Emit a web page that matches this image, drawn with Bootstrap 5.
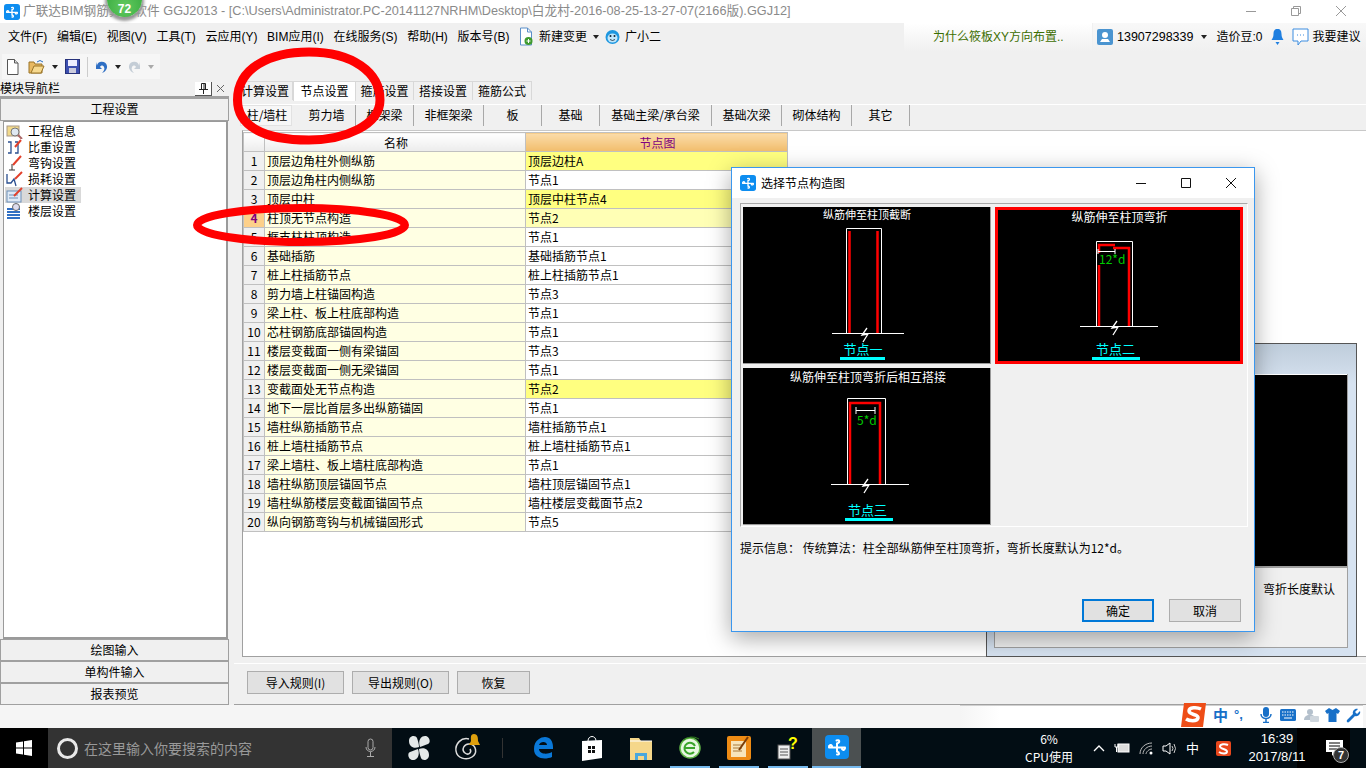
<!DOCTYPE html>
<html lang="zh-CN">
<head>
    <meta charset="UTF-8">
    <meta name="viewport" content="width=device-width, initial-scale=1.0">
    <title>广联达BIM钢筋算量软件 GGJ2013</title>
    <link href="https://cdn.jsdelivr.net/npm/bootstrap@5.3.0/dist/css/bootstrap.min.css" rel="stylesheet">
    <style>
        html, body { margin: 0; height: 768px; overflow: hidden; }
        body { width: 1366px; position: relative; background: #f0f0f0; color: #000; font-family: "Liberation Sans", "Noto Sans CJK SC", sans-serif; font-size: 12px; line-height: 1.2; }
        svg { display: block; flex: none; }
        .cjk { font-family: "Noto Sans CJK SC", sans-serif; }
        .w-53 { width: 53px; } .w-55 { width: 55px; } .w-58 { width: 58px; } .w-59 { width: 59px; } .w-63 { width: 63px; }
        .w-70 { width: 70px; } .w-73 { width: 73px; } .w-97 { width: 97px; } .w-112 { width: 112px; }

        .title-bar { height: 23px; background: #fff; color: #8a8a8a; padding-left: 4px; white-space: nowrap; }
        .title-bar .app-name { margin-left: 3px; font-size: 12.7px; }
        .win-ctrls { position: absolute; right: 20px; top: 6px; gap: 35px; }
        .score-ball { position: absolute; left: 107px; top: -18px; width: 35px; height: 35px; border-radius: 50%; background: radial-gradient(circle at 50% 70%, #62c95f, #2aa136); box-shadow: 0 2px 3px 2px #999; color: #fff; font-weight: 700; font-size: 12px; text-align: center; padding-top: 20px; }

        .menu-bar { height: 28px; white-space: nowrap; }
        .menu-left { padding-left: 8px; gap: 9.700px; width: 904px; }
        .tight-3 { margin-left: -3px; }
        .tight-4 { margin-left: -4px; }
        .tight-5 { margin-left: -5px; }
        .news-box { width: 188px; height: 28px; background: linear-gradient(#fff, #f0f0f0); color: #3c6e00; padding-left: 29px; font-size: 12px; }
        .user-box { flex: 1; height: 28px; margin-left: 1px; padding-left: 4px; background: linear-gradient(#f8f8f8, #f0f0f0); }
        .phone-no { margin-left: 4px; font-size: 12.500px; }
        .user-gap { margin-left: 9px; }
        .mini-caret { width: 0; height: 0; border: 3px solid transparent; border-top: 4px solid #222; border-bottom: 0; }
        .mini-caret.off { border-top-color: #aaa; }

        .tool-bar { height: 30px; padding-top: 3px; }
        .tool-strip { margin-left: 2px; width: 158px; height: 25px; background: #f6f6f6; padding-left: 4px; gap: 7px; }
        .tool-sep { width: 1px; height: 20px; background: #ccc; }
        .open-ico { margin-left: 2px; }

        .work-area { height: 624px; }
        .nav-pane { width: 229px; flex: none; }
        .nav-head { height: 16px; border-bottom: 1px solid #a0a0a0; font-size: 12px; white-space: nowrap; }
        .pin-btn { margin-left: auto; width: 17px; height: 14px; border: solid #555; border-width: 0 1px 1px 0; background: #fff; margin-right: 4px; }
        .pane-btn { display: block; width: 100%; height: 22px; padding: 1px 0 0; border: 1px solid #a0a0a0; border-radius: 0; background: #f0f0f0; color: #000; font-size: 12px; line-height: 20px; text-align: center; flex: none; }
        .pane-btn.first { height: 24px; padding: 0; line-height: 22px; border-width: 2px 1px 1px; }
        .tree-box { height: 518px; flex: none; margin-left: 3px; margin-right: 1px; background: #fff; border: 1px solid #9a9a9a; border-width: 1px 2px 2px 1px; padding: 1px 0 0 1px; }
        .tree-row { height: 16px; width: 76px; gap: 5px; white-space: nowrap; padding-left: 1px; font-family: "Noto Sans CJK SC", sans-serif; }
        .tree-row.on { background: #d9d9d9; }

        .right-pane { margin-left: 5px; flex: 1; min-width: 0; }
        .page-tabs { height: 19px; padding-left: 4px; border: 0; flex-wrap: nowrap; }
        .page-tab { height: 19px; line-height: 18px; text-align: center; font-family: "Noto Sans CJK SC", sans-serif; background: #f0f0f0; border: 1px solid #d8d8d8; border-bottom: 0; border-left: 0; }
        .page-tab.on { height: 20px; background: #fff; border-left: 1px solid #d8d8d8; }
        .sub-tabs { height: 24px; margin: 4px 0 0 6px; background: #f0f0f0; border-top: 1px solid #fff; }
        .sub-tab { height: 21px; line-height: 20px; text-align: center; border-right: 1px solid #a8a8a8; font-family: "Noto Sans CJK SC", sans-serif; flex: none; }
        .sub-tab.on { background: #f7f7f7; box-shadow: inset 0 0 0 1px #e2e2e2; border-right-color: #f0f0f0; margin-right: 5px; padding-left: 2px; }
        .grid-panel { height: 527px; margin: 2px 0 0 8px; background: #fff; border-top: 1px solid #c8c8c8; border-bottom: 1px solid #a0a0a0; border-left: 1px solid #a0a0a0; padding-top: 1px; }
        .rule-table { width: 544px; margin: 0; table-layout: fixed; border-collapse: collapse; font-family: "Noto Sans CJK SC", sans-serif; font-size: 12px; }
        .rule-table th, .rule-table td { height: 19px; padding: 0 0 0 2px; line-height: 17px; border: 1px solid #c0c0c0; background: #fff; color: #000; font-weight: 400; white-space: nowrap; overflow: hidden; box-shadow: none; }
        .rule-table th { text-align: center; background: linear-gradient(#fff, #ececec); }
        .rule-table th.pic-col { background: linear-gradient(#fbdcaa, #f2bd6b); color: #800080; }
        .rule-table .num-col { background: #f0f0f0; text-align: center; padding: 0; }
        .rule-table .name-col { background: #ffffe3; }
        .rule-table .hl-cell { background: #ffff80; }
        .rule-table .cur-cell { background: #ffffb5; }
        .rule-table .cur-num { background: #fdd08a; color: #800080; font-weight: 700; }
        .col-n { width: 21px; } .col-name { width: 261px; } .col-pic { width: 262px; }
        .btn-bar { height: 42px; margin-top: 6px; padding: 7px 0 0 13px; gap: 8px; border-top: 1px solid #fff; border-bottom: 1px solid #a0a0a0; }
        .rule-btn { height: 23px; padding: 0; border: 1px solid #adadad; border-radius: 0; background: #e1e1e1; color: #000; font-family: "Noto Sans CJK SC", sans-serif; font-size: 12px; line-height: 20px; }

        .status-strip { height: 23px; background: #f5f5f5; }
        .ime-white { position: absolute; left: 960px; right: 3px; top: 705px; height: 23px; background: linear-gradient(90deg, #f5f5f5, #fff 40px); border-top: 1px solid #d0d0d0; }
        .ime-bar { position: absolute; left: 1180px; top: 702px; width: 186px; height: 26px; }
        .ime-cn { margin-left: 6px; color: #1870c8; font-weight: 700; font-size: 15px; font-family: "Noto Sans CJK SC", sans-serif; }
        .ime-dot { margin-left: 6px; color: #1870c8; font-weight: 700; font-size: 13px; }
        .ime-mic { margin-left: 17px; } .ime-key { margin-left: 8px; } .ime-usr { margin-left: 7px; } .ime-six { margin-left: 6px; }

        .task-bar { height: 40px; color: #fff; background: linear-gradient(90deg, #020d14 1297px, #000 1297px, #000 1350px, #020d14 1350px); }
        .start-box { width: 48px; height: 40px; background: #000; flex: none; }
        .search-box { width: 344px; height: 40px; flex: none; background: #333; color: #999; padding-left: 9px; font-size: 14px; font-family: "Noto Sans CJK SC", sans-serif; white-space: nowrap; }
        .search-ring { width: 21px; height: 21px; border: 3px solid #e8e8e8; border-radius: 50%; margin-right: 6px; flex: none; }
        .task-slot { width: 49px; height: 40px; flex: none; }
        .task-slot.first-slot { margin-left: 2px; }
        .task-slot.after-sep { margin-left: 15px; }
        .task-slot.open { background: linear-gradient(#76b9ed, #76b9ed) center bottom / 40px 2px no-repeat; }
        .task-slot.live { background: #4b5051; border-bottom: 2px solid #76b9ed; }
        .task-sep { width: 1px; height: 20px; background: #333; margin-left: 10px; flex: none; }
        .cpu-box { width: 80px; flex: none; margin-left: 148px; text-align: center; font-size: 12px; line-height: 18px; font-family: "Noto Sans CJK SC", sans-serif; }
        .tray-box { gap: 9px; margin-left: 4px; width: 144px; flex: none; }
        .tray-cn { font-size: 13px; font-family: "Noto Sans CJK SC", sans-serif; }
        .clock-box { width: 80px; flex: none; text-align: center; line-height: 18px; font-size: 13px; height: 40px; }
        .note-box { width: 50px; height: 40px; flex: none; position: relative; padding: 12px 0 0 9px; }
        .note-badge { position: absolute; left: 16px; top: 19px; width: 16px; height: 16px; border-radius: 50%; background: #333; border: 1px solid #aaa; color: #fff; font-weight: 700; font-size: 11px; line-height: 14px; text-align: center; }

        .old-window { position: absolute; left: 986px; top: 343px; width: 371px; height: 314px; border: 1px solid #555; background: linear-gradient(#bfcddb, #d6e2f0 40px); padding: 30px 8px 8px 7px; }
        .old-inner { height: 274px; background: #f0f0f0; border: 1px solid #a0a0a0; border-top: 0; font-family: "Noto Sans CJK SC", sans-serif; }
        .old-black { height: 194px; background: #000; border-top: 1px solid #fff; border-bottom: 2px solid #a0a0a0; }
        .old-text { text-align: right; padding: 14px 12px 0 0; }

        .node-dialog { position: absolute; left: 731px; top: 167px; width: 524px; height: 465px; background: #f0f0f0; border: 1px solid #3b97ee; box-shadow: 0 6px 22px rgba(0, 0, 0, .35); font-family: "Noto Sans CJK SC", sans-serif; }
        .dlg-head { height: 30px; background: #fff; padding-left: 8px; font-size: 12px; gap: 5px; }
        .dlg-ctrls { margin-left: auto; padding-right: 18px; gap: 35px; }
        .pic-panel { margin: 5px 0 0 8px; width: 508px; height: 324px; padding: 3px 3px 2px 2px; border-top: 1px solid #a8a8a8; border-left: 1px solid #a8a8a8; border-right: 1px solid #fff; border-bottom: 1px solid #fff; display: grid; grid-template-columns: 248px 248px; grid-template-rows: 157px 157px; gap: 4px; align-content: start; }
        .pic-cell { background: #000; border-right: 1px solid #999; border-bottom: 1px solid #999; width: 248px; height: 157px; }
        .pic-cell.picked { border: 3px solid #f00; }
        .pic-cell svg { overflow: visible; }
        .pic-cell text { font-family: "Noto Sans CJK SC", sans-serif; }
        .dlg-hint { margin: 14px 0 0 8px; font-size: 12px; white-space: nowrap; }
        .dlg-foot { position: absolute; right: 13px; top: 431px; gap: 15px; }
        .dlg-btn { width: 72px; height: 23px; padding: 0; border: 1px solid #adadad; border-radius: 0; background: #e1e1e1; color: #000; font-size: 12px; font-family: "Noto Sans CJK SC", sans-serif; line-height: 19px; }
        .dlg-btn.main-btn { border: 2px solid #0078d7; }

        .red-marks { position: absolute; left: 0; top: 0; pointer-events: none; }
    </style>
</head>
<body>

<svg class="d-none" width="0" height="0">
    <symbol id="gld-logo" viewBox="0 0 24 24">
        <rect width="24" height="24" rx="4" fill="#0d8df0"/>
        <path d="M4 12.5h16M11.5 5.5c3-1.500 4 2 .5 3v8c3 1 2.500 3.500 0 3M4 12.500c-.500-2.500 2-3 3-1.500M20 12.500c.500 2.500-2 3-3 1.500" fill="none" stroke="#fff" stroke-width="2" stroke-linecap="round"/>
    </symbol>
</svg>

<div class="title-bar d-flex align-items-center">
    <svg width="16" height="16"><use href="#gld-logo"/></svg>
    <span class="app-name">广联达BIM钢筋算量软件 GGJ2013 - [C:\Users\Administrator.PC-20141127NRHM\Desktop\白龙村-2016-08-25-13-27-07(2166版).GGJ12]</span>
    <div class="win-ctrls d-flex align-items-center">
        <svg width="10" height="10"><path d="M0 5.500h10" stroke="#999"/></svg>
        <svg width="10" height="10"><path d="M.5 2.500h7v7h-7zM2.500 2.500v-2h7v7h-2" fill="none" stroke="#999"/></svg>
        <svg width="10" height="10"><path d="M0 0l10 10M10 0L0 10" stroke="#999"/></svg>
    </div>
</div>
<div class="score-ball">72</div>

<div class="menu-bar d-flex">
    <div class="menu-left d-flex align-items-center">
        <span>文件(F)</span><span>编辑(E)</span><span>视图(V)</span><span>工具(T)</span><span>云应用(Y)</span><span>BIM应用(I)</span><span>在线服务(S)</span><span>帮助(H)</span><span>版本号(B)</span>
        <svg width="15" height="20" viewBox="0 0 15 20"><path d="M1.500 1h7l4 4v13h-11z" fill="#fff" stroke="#5b8fc9"/><path d="M8.500 1v4h4" fill="none" stroke="#5b8fc9"/><circle cx="9.500" cy="14" r="4" fill="#3f9a2e"/><path d="M7.500 14h4M9.500 12v4" stroke="#fff"/></svg>
        <span class="tight-5">新建变更</span>
        <span class="mini-caret tight-4"></span>
        <svg class="tight-3" width="15" height="16" viewBox="0 0 15 16"><circle cx="7.500" cy="8" r="7" fill="#1d97e0"/><ellipse cx="7.500" cy="9" rx="5" ry="4.500" fill="#bfe6fb"/><circle cx="5.500" cy="7" r="1" fill="#123"/><circle cx="9.500" cy="7" r="1" fill="#123"/><path d="M5 10.500q2.500 2 5 0" fill="none" stroke="#123" stroke-width=".8"/></svg>
        <span class="tight-5">广小二</span>
    </div>
    <div class="news-box d-flex align-items-center">为什么筱板XY方向布置..</div>
    <div class="user-box d-flex align-items-center">
        <svg width="16" height="16" viewBox="0 0 16 16"><rect width="16" height="16" rx="2" fill="#4a94d0"/><circle cx="8" cy="6" r="3" fill="#fff"/><path d="M3 13h10l-2-3H5z" fill="#fff"/></svg>
        <span class="phone-no">13907298339</span>
        <span class="mini-caret ms-2"></span>
        <span class="user-gap">造价豆:0</span>
        <svg class="ms-2" width="13" height="18" viewBox="0 0 13 18"><path d="M6.500 1c3 0 4 2 4 5 0 3 1 4 2 6H.5c1-2 2-3 2-6 0-3 1-5 4-5z" fill="#1f7fe0"/><path d="M4.500 14h4l-2 3z" fill="#1f7fe0"/></svg>
        <svg class="ms-2" width="17" height="19" viewBox="0 0 17 19"><path d="M1 1h15v12H9l-3 4v-4H1z" fill="#fff" stroke="#3d8de0"/><path d="M5 7h1M8 7h1M11 7h1" stroke="#3d8de0"/></svg>
        <span class="ms-1">我要建议</span>
    </div>
</div>

<div class="tool-bar">
    <div class="tool-strip d-flex align-items-center">
        <svg width="13" height="16" viewBox="0 0 13 16"><path d="M1.500.5h7l3.500 3.500v11.500h-10.500z" fill="#fff" stroke="#555"/><path d="M8.500.5v3.500h3.500" fill="#ddd" stroke="#555"/></svg>
        <svg class="open-ico" width="17" height="15" viewBox="0 0 17 15"><path d="M1 3h5l1 2h7v9H1z" fill="#e8b962" stroke="#9a7428"/><path d="M3 14l3-7h10l-3 7z" fill="#f6d98f" stroke="#9a7428"/><path d="M9 3q3-3 6 0" fill="none" stroke="#2a6fc0"/></svg>
        <span class="mini-caret"></span>
        <svg width="15" height="15" viewBox="0 0 15 15"><rect x=".5" y=".5" width="14" height="14" fill="#3d4fb0" stroke="#27327a"/><rect x="3" y="1" width="9" height="6" fill="#eef"/><rect x="4" y="9" width="7" height="5" fill="#ccd"/></svg>
        <span class="tool-sep"></span>
        <svg width="13" height="15" viewBox="0 0 13 15"><path d="M2 7c0-5 9-6 10 0 .5 3-2 6-5 7 2-2 3-4 2-6-1-2-3-2-4 0l2 2H1V3z" fill="#2f6fc4"/></svg>
        <span class="mini-caret"></span>
        <svg width="13" height="15" viewBox="0 0 13 15"><path d="M11 7c0-5-9-6-10 0-.5 3 2 6 5 7-2-2-3-4-2-6 1-2 3-2 4 0l-2 2h6V3z" fill="#c4cdd6"/></svg>
        <span class="mini-caret off"></span>
    </div>
</div>

<div class="work-area d-flex">
    <div class="nav-pane d-flex flex-column">
        <div class="nav-head d-flex align-items-center">
            <span class="cjk">模块导航栏</span>
            <span class="pin-btn d-flex align-items-center justify-content-center">
                <svg width="9" height="11" viewBox="0 0 9 11"><path d="M2.500 .5h4v6h-4zM0 6.500h9M4.500 7v4M5 1v5" fill="none" stroke="#222"/></svg>
            </span>
            <svg class="me-1" width="9" height="9" viewBox="0 0 9 9"><path d="M1 1l7 7M8 1L1 8" stroke="#666"/></svg>
        </div>
        <button class="btn pane-btn first" type="button">工程设置</button>
        <div class="tree-box" id="tree-box"></div>
        <button class="btn pane-btn" type="button">绘图输入</button>
        <button class="btn pane-btn" type="button">单构件输入</button>
        <button class="btn pane-btn" type="button">报表预览</button>
    </div>

    <div class="right-pane d-flex flex-column">
        <div class="nav page-tabs">
            <div class="page-tab w-55">计算设置</div>
            <div class="page-tab on w-63">节点设置</div>
            <div class="page-tab w-58">箍筋设置</div>
            <div class="page-tab w-59">搭接设置</div>
            <div class="page-tab w-59">箍筋公式</div>
        </div>
        <div class="sub-tabs d-flex">
            <div class="sub-tab on w-53">柱/墙柱</div>
            <div class="sub-tab w-58">剪力墙</div>
            <div class="sub-tab w-58">框架梁</div>
            <div class="sub-tab w-70">非框架梁</div>
            <div class="sub-tab w-58">板</div>
            <div class="sub-tab w-58">基础</div>
            <div class="sub-tab w-112">基础主梁/承台梁</div>
            <div class="sub-tab w-70">基础次梁</div>
            <div class="sub-tab w-70">砌体结构</div>
            <div class="sub-tab w-58">其它</div>
        </div>
        <div class="grid-panel">
            <table class="table rule-table">
                <colgroup><col class="col-n"><col class="col-name"><col class="col-pic"></colgroup>
                <thead>
                <tr><th></th><th>名称</th><th class="pic-col">节点图</th></tr>
                </thead>
                <tbody id="rule-body"></tbody>
            </table>
        </div>
        <div class="btn-bar d-flex">
            <button class="btn rule-btn w-97" type="button">导入规则(I)</button>
            <button class="btn rule-btn w-97" type="button">导出规则(O)</button>
            <button class="btn rule-btn w-73" type="button">恢复</button>
        </div>
    </div>
</div>

<div class="status-strip"></div>

<div class="task-bar d-flex align-items-center">
    <div class="start-box d-flex align-items-center justify-content-center">
        <svg width="16" height="16" viewBox="0 0 16 16"><path d="M0 2.500l7-1v6H0zM8 1.300l8-1.300v7.500H8zM0 8.500h7v6l-7-1zM8 8.500h8V16l-8-1.300z" fill="#fff"/></svg>
    </div>
    <div class="search-box d-flex align-items-center">
        <span class="search-ring"></span>
        <span>在这里输入你要搜索的内容</span>
        <svg class="ms-auto me-3" width="11" height="20" viewBox="0 0 11 20"><rect x="3" y="1" width="5" height="11" rx="2.500" fill="none" stroke="#aaa"/><path d="M1 9c0 6 9 6 9 0M5.500 14v4M2 18.500h7" fill="none" stroke="#aaa"/></svg>
    </div>
    <div class="task-slot first-slot d-flex align-items-center justify-content-center">
        <svg width="22" height="26" viewBox="0 0 22 26"><path d="M11 12C6 14 1 12 1 6s7-6 8-3 2 6 2 9zM11 14c5-2 10 0 10 6s-7 6-8 3-2-6-2-9zM12 12c-2-5 0-11 5-11s6 7 3 8-5 2-8 3zM10 14c2 5 0 11-5 11s-6-7-3-8 5-2 8-3z" fill="#e4e8e8"/></svg>
    </div>
    <div class="task-slot d-flex align-items-center justify-content-center">
        <svg width="30" height="32" viewBox="0 0 30 32"><path d="M16 7C8 5 2 12 3 19s10 10 16 6 4-12-2-13-9 6-5 9 7-1 5-4" fill="none" stroke="#ddd" stroke-width="1.500"/><path d="M21 2c4 0 4 4 4 7l2 4H16l2-4c0-3-1-7 3-7z" fill="#dfa00e"/></svg>
    </div>
    <div class="task-sep"></div>
    <div class="task-slot after-sep d-flex align-items-center justify-content-center">
        <svg width="20" height="22" viewBox="0 0 20 22"><path d="M1 12C1 3 8 0 12 0c5 0 8 4 8 10v2H6c0 5 8 6 13 3v5c-7 3-18 2-18-8zm5-4h8c0-4-7-4-8 0z" fill="#0a78d8"/></svg>
    </div>
    <div class="task-slot d-flex align-items-center justify-content-center">
        <svg width="20" height="26" viewBox="0 0 20 26"><path d="M6 6c0-6 8-6 8 0" fill="none" stroke="#fff"/><path d="M0 6l20-1v18l-20 3z" fill="#fff"/><path d="M6 11h3v3H6zM10 11h3v3h-3zM6 15h3v3H6zM10 15h3v3h-3z" fill="#111"/></svg>
    </div>
    <div class="task-slot d-flex align-items-center justify-content-center">
        <svg width="22" height="24" viewBox="0 0 22 24"><path d="M0 2h9l2 3h11v19H0z" fill="#f5d78a"/><path d="M0 5h22" stroke="#fff"/><path d="M5 17h12v7h-3v-4H8v4H5z" fill="#48a7dd"/></svg>
    </div>
    <div class="task-slot open d-flex align-items-center justify-content-center">
        <svg width="24" height="24" viewBox="0 0 24 24"><circle cx="12" cy="12" r="10" fill="#e9f7e2" stroke="#62b848" stroke-width="1.500"/><path d="M7 12h10" stroke="#3aa52a" stroke-width="2"/><path d="M17 10a5.500 5.500 0 1 0-1 6" fill="none" stroke="#3aa52a" stroke-width="2"/><path d="M4 5q9-7 17-2" fill="none" stroke="#2d7a1c"/></svg>
    </div>
    <div class="task-slot open d-flex align-items-center justify-content-center">
        <svg width="24" height="24" viewBox="0 0 24 24"><rect width="24" height="24" rx="2" fill="#ee8b14"/><rect x="4" y="5" width="15" height="16" fill="#f7e5bb"/><path d="M6 9h9M6 12h9M6 15h9" stroke="#a97a3b"/><path d="M21 1L12 14" stroke="#7a3d07" stroke-width="2"/></svg>
    </div>
    <div class="task-slot open d-flex align-items-center justify-content-center">
        <svg width="22" height="24" viewBox="0 0 22 24"><rect x="1" y="9" width="12" height="14" fill="#eee" stroke="#555"/><path d="M3 13h8M3 16h8M3 19h8" stroke="#555"/><text x="11" y="13" font-size="16" font-weight="700" fill="#ff0" font-family="Liberation Sans, sans-serif">?</text></svg>
    </div>
    <div class="task-slot live d-flex align-items-center justify-content-center">
        <svg width="24" height="24"><use href="#gld-logo"/></svg>
    </div>
    <div class="cpu-box"><div>6%</div><div>CPU使用</div></div>
    <div class="tray-box d-flex align-items-center">
        <svg width="12" height="8" viewBox="0 0 12 8"><path d="M1 7l5-5 5 5" fill="none" stroke="#fff" stroke-width="1.300"/></svg>
        <svg width="16" height="12" viewBox="0 0 16 12"><rect x="4" y="2" width="11" height="8" fill="#ddd" stroke="#fff"/><path d="M1 2v3h3V2M2.500 5v5" fill="none" stroke="#fff"/></svg>
        <svg width="14" height="13" viewBox="0 0 14 13"><path d="M1 12C1 6 6 1 13 1M4 12c0-4 4-8 9-8M7 12c0-2 3-5 6-5" fill="none" stroke="#bbb"/><circle cx="12" cy="11" r="1.500" fill="#fff"/></svg>
        <svg width="15" height="13" viewBox="0 0 15 13"><path d="M1 4h3l4-3v11L4 9H1z" fill="none" stroke="#fff"/><path d="M10 4q2 2.500 0 5M12 2q3 4.500 0 9" fill="none" stroke="#ccc"/></svg>
        <span class="tray-cn">中</span>
        <svg class="ms-2" width="15" height="15" viewBox="0 0 15 15"><rect width="15" height="15" rx="2" fill="#e8471c"/><path d="M12 4C9 2.500 4 3 4 5.500S11 8 11 10.500 6 13 3 11" fill="none" stroke="#fff" stroke-width="2"/></svg>
    </div>
    <div class="clock-box d-flex flex-column justify-content-center"><div>16:39</div><div>2017/8/11</div></div>
    <div class="note-box">
        <svg width="17" height="16" viewBox="0 0 17 16"><path d="M0 0h17v12H9l-3 4v-4H0z" fill="#fff"/><path d="M3 3h11M3 6h11M3 9h8" stroke="#000"/></svg>
        <span class="note-badge">7</span>
    </div>
</div>

<div class="ime-white"></div>
<div class="ime-bar d-flex align-items-center">
    <svg width="27" height="26" viewBox="0 0 27 26"><path d="M4 1h22l-3 24H1z" fill="#ee4d17"/><path d="M21 7c-4-2-12-2-12 2s10 3 9 7-9 3-12 1" fill="none" stroke="#fff" stroke-width="3.500"/></svg>
    <span class="ime-cn">中</span>
    <span class="ime-dot">°,</span>
    <svg class="ime-mic" width="12" height="16" viewBox="0 0 12 16"><rect x="3" y="0" width="6" height="10" rx="3" fill="#1870c8"/><path d="M1 7c0 6 10 6 10 0M6 12v3M3 15.500h6" fill="none" stroke="#1870c8" stroke-width="1.500"/></svg>
    <svg class="ime-key" width="16" height="12" viewBox="0 0 16 12"><rect width="16" height="12" rx="1.500" fill="#1870c8"/><path d="M2 3h12M2 6h12" stroke="#fff" stroke-dasharray="1.500 1"/><path d="M4 9h8" stroke="#fff"/></svg>
    <svg class="ime-usr" width="16" height="14" viewBox="0 0 16 14"><circle cx="7" cy="4" r="3" fill="#b4c0cc"/><path d="M1 12c0-6 8-6 10-4v4z" fill="#b4c0cc"/><rect x="7" y="8" width="9" height="6" rx="1" fill="#cfd6dd"/></svg>
    <svg class="ime-six" width="15" height="14" viewBox="0 0 15 14"><path d="M4 0l3.500 2L11 0l4 3-2 3-1.500-1v9h-8V5L2 6 0 3z" fill="#1870c8"/></svg>
    <svg class="ime-six" width="15" height="15" viewBox="0 0 15 15"><path d="M14 3l-3 3-2-2 3-3C9 0 6 3 7 6L1 12c-1 2 1 3 2 2l6-6c3 1 6-2 5-5z" fill="#1870c8"/></svg>
</div>

<div class="old-window">
    <div class="old-inner">
        <div class="old-black"></div>
        <div class="old-text">弯折长度默认</div>
    </div>
</div>

<div class="node-dialog">
    <div class="dlg-head d-flex align-items-center">
        <svg width="16" height="16"><use href="#gld-logo"/></svg>
        <span>选择节点构造图</span>
        <div class="dlg-ctrls d-flex align-items-center">
            <svg width="10" height="10"><path d="M0 5.500h10" stroke="#111"/></svg>
            <svg width="10" height="10"><path d="M.5 .5h9v9h-9z" fill="none" stroke="#111"/></svg>
            <svg width="10" height="10"><path d="M0 0l10 10M10 0L0 10" stroke="#111"/></svg>
        </div>
    </div>
    <div class="pic-panel">
        <div class="pic-cell">
            <svg width="247" height="156" viewBox="0 0 247 156">
                <text x="124" y="12" fill="#fff" font-size="11" text-anchor="middle">纵筋伸至柱顶截断</text>
                <path d="M103.500 126V21.500h35V126" fill="none" stroke="#fff"/>
                <path d="M106.500 24v102M134.500 24v102" stroke="#f00" stroke-width="2.500"/>
                <path d="M89 126.500h72" stroke="#fff"/>
                <path d="M124 121l-5 7 6-1-5 8" fill="none" stroke="#fff" stroke-width="1.300"/>
                <text x="120" y="147" fill="#0ff" font-size="13" text-anchor="middle">节点一</text>
                <rect x="97" y="150" width="45" height="3" fill="#0ff"/>
            </svg>
        </div>
        <div class="pic-cell picked">
            <svg width="242" height="151" viewBox="3 3 242 151">
                <text x="124.500" y="15" fill="#fff" font-size="12" text-anchor="middle">纵筋伸至柱顶弯折</text>
                <path d="M101.500 119V34.500h36V119" fill="none" stroke="#fff"/>
                <path d="M104 58v61M104 46v-8h16M134 119V41h-16" fill="none" stroke="#f00" stroke-width="2.500"/>
                <path d="M103 44.500h17M103 42v5M120 42v5" fill="none" stroke="#fff"/>
                <text x="104" y="57" fill="#0c0" font-size="12">12*d</text>
                <path d="M85 119.500h78" stroke="#fff"/>
                <path d="M122 114l-5 7 6-1-5 8" fill="none" stroke="#fff" stroke-width="1.300"/>
                <text x="120.500" y="147" fill="#0ff" font-size="13" text-anchor="middle">节点二</text>
                <rect x="97" y="150" width="48" height="3" fill="#0ff"/>
            </svg>
        </div>
        <div class="pic-cell">
            <svg width="247" height="156" viewBox="0 0 247 156">
                <text x="125" y="14" fill="#fff" font-size="12" text-anchor="middle">纵筋伸至柱顶弯折后相互搭接</text>
                <path d="M104.500 116V30.500h38V116" fill="none" stroke="#fff"/>
                <path d="M107 116V35h30v81" fill="none" stroke="#f00" stroke-width="2.500"/>
                <path d="M113 42.500h19M113 39v7M132 39v7" fill="none" stroke="#fff"/>
                <text x="114" y="57" fill="#0c0" font-size="12">5*d</text>
                <path d="M88 116.500h78" stroke="#fff"/>
                <path d="M125 111l-5 7 6-1-5 8" fill="none" stroke="#fff" stroke-width="1.300"/>
                <text x="124.500" y="147" fill="#0ff" font-size="13" text-anchor="middle">节点三</text>
                <rect x="102" y="150" width="48" height="3" fill="#0ff"/>
            </svg>
        </div>
    </div>
    <div class="dlg-hint">提示信息&#xFF1A; 传统算法&#xFF1A;柱全部纵筋伸至柱顶弯折&#xFF0C;弯折长度默认为12*d。</div>
    <div class="dlg-foot d-flex">
        <button class="btn dlg-btn main-btn" type="button">确定</button>
        <button class="btn dlg-btn" type="button">取消</button>
    </div>
</div>

<svg class="red-marks" width="1366" height="768">
    <path d="M237.500 100C237.500 68 270 52 309 52C352 52 380 72 380 100C380 125 345 140 309 140C262 140 237.500 125 237.500 100Z" fill="none" stroke="#f00" stroke-width="9"/>
    <ellipse cx="301" cy="225" rx="104" ry="17" fill="none" stroke="#f00" stroke-width="8"/>
</svg>

<script>
    const treeItems = [
        { name: '工程信息', icon: '<rect x="1" y="3" width="12" height="10" fill="#f1d98b" stroke="#a98"/><circle cx="9" cy="9" r="4" fill="#dfe9f2" stroke="#777"/><path d="M12 12l4 4" stroke="#a66" stroke-width="2"/>' },
        { name: '比重设置', icon: '<path d="M2 3h3v11H2M9 3h3M12 3v11H9" fill="none" stroke="#2a4f90" stroke-width="1.300"/><path d="M15 1l-6 7" stroke="#e2402b" stroke-width="2"/>' },
        { name: '弯钩设置', icon: '<path d="M15 1L7 10" stroke="#e2402b" stroke-width="2"/><path d="M6 9v6M3 15h6" stroke="#333"/>' },
        { name: '损耗设置', icon: '<path d="M1 3v9h4l3-4 2 7" fill="none" stroke="#2a4f90" stroke-width="1.300"/><path d="M16 1l-7 7" stroke="#e2402b" stroke-width="2"/>' },
        { name: '计算设置', icon: '<rect x="1" y="4" width="14" height="11" fill="#dfeaf6" stroke="#6c8fb8"/><path d="M3 8h9M3 11h9" stroke="#6c8fb8"/><path d="M16 1L8 9" stroke="#e2402b" stroke-width="2"/>', active: true },
        { name: '楼层设置', icon: '<path d="M1 6h13M1 9h13M1 12h13M1 15h13" stroke="#2f6fc4" stroke-width="2"/><circle cx="10" cy="4" r="3.500" fill="#dde" stroke="#666"/>' }
    ];
    const ruleRows = [
        ['顶层边角柱外侧纵筋', '顶层边柱A', 'hl-cell'],
        ['顶层边角柱内侧纵筋', '节点1'],
        ['顶层中柱', '顶层中柱节点4', 'hl-cell'],
        ['柱顶无节点构造', '节点2', 'cur-cell'],
        ['框支柱柱顶构造', '节点1'],
        ['基础插筋', '基础插筋节点1'],
        ['桩上柱插筋节点', '桩上柱插筋节点1'],
        ['剪力墙上柱锚固构造', '节点3'],
        ['梁上柱、板上柱底部构造', '节点1'],
        ['芯柱钢筋底部锚固构造', '节点1'],
        ['楼层变截面一侧有梁锚固', '节点3'],
        ['楼层变截面一侧无梁锚固', '节点1'],
        ['变截面处无节点构造', '节点2', 'hl-cell'],
        ['地下一层比首层多出纵筋锚固', '节点1'],
        ['墙柱纵筋插筋节点', '墙柱插筋节点1'],
        ['桩上墙柱插筋节点', '桩上墙柱插筋节点1'],
        ['梁上墙柱、板上墙柱底部构造', '节点1'],
        ['墙柱纵筋顶层锚固节点', '墙柱顶层锚固节点1'],
        ['墙柱纵筋楼层变截面锚固节点', '墙柱楼层变截面节点2'],
        ['纵向钢筋弯钩与机械锚固形式', '节点5']
    ];

    document.getElementById('tree-box').innerHTML = treeItems.map(item => `
        <div class="tree-row d-flex align-items-center ${item.active ? 'on' : ''}">
            <svg width="17" height="16" viewBox="0 0 17 16">${item.icon}</svg>
            <span>${item.name}</span>
        </div>`).join('');

    document.getElementById('rule-body').innerHTML = ruleRows.map((row, i) => `
        <tr>
            <td class="num-col ${row[2] === 'cur-cell' ? 'cur-num' : ''}">${i + 1}</td>
            <td class="name-col">${row[0]}</td>
            <td class="${row[2] || ''}">${row[1]}</td>
        </tr>`).join('');
</script>
</body>
</html>
